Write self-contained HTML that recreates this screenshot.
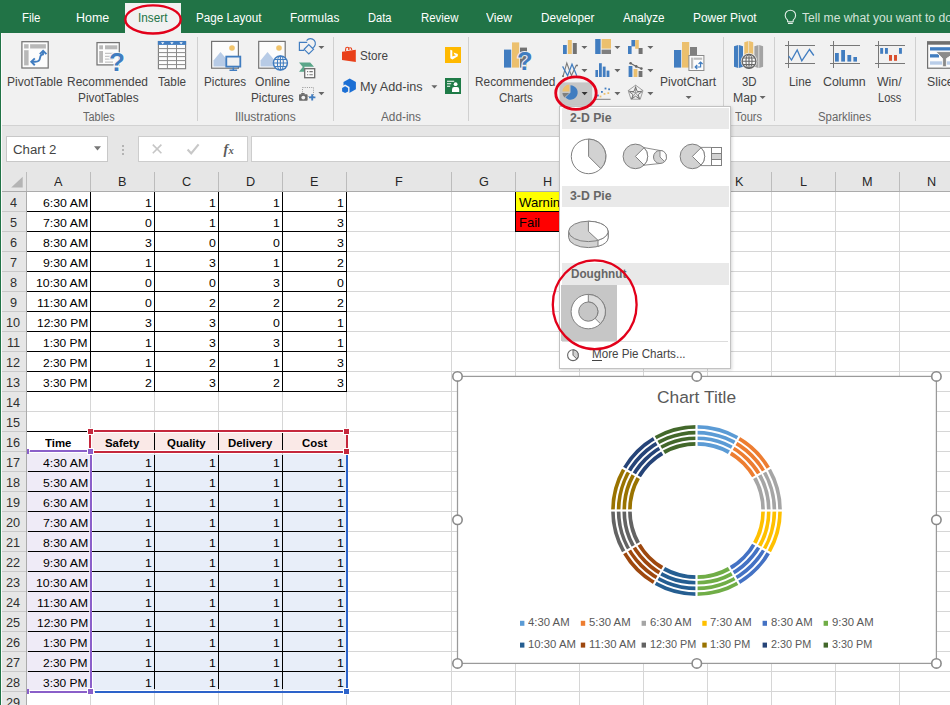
<!DOCTYPE html><html><head><meta charset="utf-8"><title>Excel</title><style>
html,body{margin:0;padding:0}
body{width:950px;height:705px;position:relative;overflow:hidden;background:#fff;font-family:'Liberation Sans', sans-serif;}
.t{position:absolute;white-space:nowrap;transform-origin:0 0;}
.a{position:absolute;}
svg{position:absolute;left:0;top:0;overflow:visible}

</style></head><body>
<div class="a" style="left:0;top:0;width:950px;height:33px;background:#217346"></div>
<div class="a" style="left:125px;top:3px;width:56px;height:30px;background:#f1f1f1"></div>
<div class="a" style="left:0;top:33px;width:950px;height:92px;background:#f1f1f1"></div>
<div class="a" style="left:0;top:125px;width:950px;height:1px;background:#d2d2d2"></div>
<div class="a" style="left:0;top:126px;width:950px;height:66px;background:#e6e6e6"></div>
<div class="a" style="left:6px;top:136px;width:100px;height:24px;background:#fff;border:1px solid #c8c8c8"></div>
<div class="a" style="left:138px;top:136px;width:108px;height:24px;background:#fff;border:1px solid #cdcdcd"></div>
<div class="a" style="left:251px;top:136px;width:710px;height:24px;background:#fff;border:1px solid #cdcdcd"></div>
<div class="a" style="left:0;top:192px;width:26px;height:513px;background:#e6e6e6"></div>
<svg width="950" height="705" viewBox="0 0 950 705" shape-rendering="crispEdges">
<rect x="27" y="453" width="63" height="237" fill="#efebf7"/>
<rect x="93" y="454" width="253" height="236" fill="#e8eef9"/>
<rect x="92" y="433" width="254" height="17" fill="#fae9e7"/>
<rect x="516" y="192" width="63" height="19" fill="#ffff00"/>
<rect x="516" y="212" width="63" height="19" fill="#ff0000"/>
<rect x="90" y="192" width="1" height="513" fill="#d6d6d6"/>
<rect x="154" y="192" width="1" height="513" fill="#d6d6d6"/>
<rect x="218" y="192" width="1" height="513" fill="#d6d6d6"/>
<rect x="282" y="192" width="1" height="513" fill="#d6d6d6"/>
<rect x="346" y="192" width="1" height="513" fill="#d6d6d6"/>
<rect x="451" y="192" width="1" height="513" fill="#d6d6d6"/>
<rect x="515" y="192" width="1" height="513" fill="#d6d6d6"/>
<rect x="579" y="192" width="1" height="513" fill="#d6d6d6"/>
<rect x="643" y="192" width="1" height="513" fill="#d6d6d6"/>
<rect x="707" y="192" width="1" height="513" fill="#d6d6d6"/>
<rect x="771" y="192" width="1" height="513" fill="#d6d6d6"/>
<rect x="835" y="192" width="1" height="513" fill="#d6d6d6"/>
<rect x="899" y="192" width="1" height="513" fill="#d6d6d6"/>
<rect x="27" y="211" width="923" height="1" fill="#d6d6d6"/>
<rect x="27" y="231" width="923" height="1" fill="#d6d6d6"/>
<rect x="27" y="251" width="923" height="1" fill="#d6d6d6"/>
<rect x="27" y="271" width="923" height="1" fill="#d6d6d6"/>
<rect x="27" y="291" width="923" height="1" fill="#d6d6d6"/>
<rect x="27" y="311" width="923" height="1" fill="#d6d6d6"/>
<rect x="27" y="331" width="923" height="1" fill="#d6d6d6"/>
<rect x="27" y="351" width="923" height="1" fill="#d6d6d6"/>
<rect x="27" y="371" width="923" height="1" fill="#d6d6d6"/>
<rect x="27" y="391" width="923" height="1" fill="#d6d6d6"/>
<rect x="27" y="411" width="923" height="1" fill="#d6d6d6"/>
<rect x="27" y="431" width="923" height="1" fill="#d6d6d6"/>
<rect x="27" y="451" width="923" height="1" fill="#d6d6d6"/>
<rect x="27" y="471" width="923" height="1" fill="#d6d6d6"/>
<rect x="27" y="491" width="923" height="1" fill="#d6d6d6"/>
<rect x="27" y="511" width="923" height="1" fill="#d6d6d6"/>
<rect x="27" y="531" width="923" height="1" fill="#d6d6d6"/>
<rect x="27" y="551" width="923" height="1" fill="#d6d6d6"/>
<rect x="27" y="571" width="923" height="1" fill="#d6d6d6"/>
<rect x="27" y="591" width="923" height="1" fill="#d6d6d6"/>
<rect x="27" y="611" width="923" height="1" fill="#d6d6d6"/>
<rect x="27" y="631" width="923" height="1" fill="#d6d6d6"/>
<rect x="27" y="651" width="923" height="1" fill="#d6d6d6"/>
<rect x="27" y="671" width="923" height="1" fill="#d6d6d6"/>
<rect x="27" y="691" width="923" height="1" fill="#d6d6d6"/>
<rect x="27" y="711" width="923" height="1" fill="#d6d6d6"/>
<rect x="26" y="172" width="1" height="19" fill="#bcbcbc"/>
<rect x="90" y="172" width="1" height="19" fill="#bcbcbc"/>
<rect x="154" y="172" width="1" height="19" fill="#bcbcbc"/>
<rect x="218" y="172" width="1" height="19" fill="#bcbcbc"/>
<rect x="282" y="172" width="1" height="19" fill="#bcbcbc"/>
<rect x="346" y="172" width="1" height="19" fill="#bcbcbc"/>
<rect x="451" y="172" width="1" height="19" fill="#bcbcbc"/>
<rect x="515" y="172" width="1" height="19" fill="#bcbcbc"/>
<rect x="579" y="172" width="1" height="19" fill="#bcbcbc"/>
<rect x="643" y="172" width="1" height="19" fill="#bcbcbc"/>
<rect x="707" y="172" width="1" height="19" fill="#bcbcbc"/>
<rect x="771" y="172" width="1" height="19" fill="#bcbcbc"/>
<rect x="835" y="172" width="1" height="19" fill="#bcbcbc"/>
<rect x="899" y="172" width="1" height="19" fill="#bcbcbc"/>
<rect x="0" y="191" width="950" height="1" fill="#ababab"/>
<rect x="26" y="192" width="1" height="513" fill="#ababab"/>
<rect x="2" y="211" width="24" height="1" fill="#c9c9c9"/>
<rect x="2" y="231" width="24" height="1" fill="#c9c9c9"/>
<rect x="2" y="251" width="24" height="1" fill="#c9c9c9"/>
<rect x="2" y="271" width="24" height="1" fill="#c9c9c9"/>
<rect x="2" y="291" width="24" height="1" fill="#c9c9c9"/>
<rect x="2" y="311" width="24" height="1" fill="#c9c9c9"/>
<rect x="2" y="331" width="24" height="1" fill="#c9c9c9"/>
<rect x="2" y="351" width="24" height="1" fill="#c9c9c9"/>
<rect x="2" y="371" width="24" height="1" fill="#c9c9c9"/>
<rect x="2" y="391" width="24" height="1" fill="#c9c9c9"/>
<rect x="2" y="411" width="24" height="1" fill="#c9c9c9"/>
<rect x="2" y="431" width="24" height="1" fill="#c9c9c9"/>
<rect x="2" y="451" width="24" height="1" fill="#c9c9c9"/>
<rect x="2" y="471" width="24" height="1" fill="#c9c9c9"/>
<rect x="2" y="491" width="24" height="1" fill="#c9c9c9"/>
<rect x="2" y="511" width="24" height="1" fill="#c9c9c9"/>
<rect x="2" y="531" width="24" height="1" fill="#c9c9c9"/>
<rect x="2" y="551" width="24" height="1" fill="#c9c9c9"/>
<rect x="2" y="571" width="24" height="1" fill="#c9c9c9"/>
<rect x="2" y="591" width="24" height="1" fill="#c9c9c9"/>
<rect x="2" y="611" width="24" height="1" fill="#c9c9c9"/>
<rect x="2" y="631" width="24" height="1" fill="#c9c9c9"/>
<rect x="2" y="651" width="24" height="1" fill="#c9c9c9"/>
<rect x="2" y="671" width="24" height="1" fill="#c9c9c9"/>
<rect x="2" y="691" width="24" height="1" fill="#c9c9c9"/>
<rect x="2" y="711" width="24" height="1" fill="#c9c9c9"/>
<rect x="27" y="211" width="320" height="1" fill="#000"/>
<rect x="27" y="231" width="320" height="1" fill="#000"/>
<rect x="27" y="251" width="320" height="1" fill="#000"/>
<rect x="27" y="271" width="320" height="1" fill="#000"/>
<rect x="27" y="291" width="320" height="1" fill="#000"/>
<rect x="27" y="311" width="320" height="1" fill="#000"/>
<rect x="27" y="331" width="320" height="1" fill="#000"/>
<rect x="27" y="351" width="320" height="1" fill="#000"/>
<rect x="27" y="371" width="320" height="1" fill="#000"/>
<rect x="27" y="391" width="320" height="1" fill="#000"/>
<rect x="90" y="192" width="1" height="200" fill="#000"/>
<rect x="154" y="192" width="1" height="200" fill="#000"/>
<rect x="218" y="192" width="1" height="200" fill="#000"/>
<rect x="282" y="192" width="1" height="200" fill="#000"/>
<rect x="346" y="192" width="1" height="200" fill="#000"/>
<path d="M515.5,192v39.5h64 M515.5,211.5h64" fill="none" stroke="#000" stroke-width="1"/>
<rect x="27" y="431" width="60" height="1" fill="#000"/>
<rect x="28" y="471" width="61" height="1" fill="#000"/>
<rect x="92" y="471" width="253" height="1" fill="#000"/>
<rect x="28" y="491" width="61" height="1" fill="#000"/>
<rect x="92" y="491" width="253" height="1" fill="#000"/>
<rect x="28" y="511" width="61" height="1" fill="#000"/>
<rect x="92" y="511" width="253" height="1" fill="#000"/>
<rect x="28" y="531" width="61" height="1" fill="#000"/>
<rect x="92" y="531" width="253" height="1" fill="#000"/>
<rect x="28" y="551" width="61" height="1" fill="#000"/>
<rect x="92" y="551" width="253" height="1" fill="#000"/>
<rect x="28" y="571" width="61" height="1" fill="#000"/>
<rect x="92" y="571" width="253" height="1" fill="#000"/>
<rect x="28" y="591" width="61" height="1" fill="#000"/>
<rect x="92" y="591" width="253" height="1" fill="#000"/>
<rect x="28" y="611" width="61" height="1" fill="#000"/>
<rect x="92" y="611" width="253" height="1" fill="#000"/>
<rect x="28" y="631" width="61" height="1" fill="#000"/>
<rect x="92" y="631" width="253" height="1" fill="#000"/>
<rect x="28" y="651" width="61" height="1" fill="#000"/>
<rect x="92" y="651" width="253" height="1" fill="#000"/>
<rect x="28" y="671" width="61" height="1" fill="#000"/>
<rect x="92" y="671" width="253" height="1" fill="#000"/>
<rect x="154" y="433" width="1" height="17" fill="#000"/>
<rect x="154" y="455" width="1" height="234" fill="#000"/>
<rect x="218" y="433" width="1" height="17" fill="#000"/>
<rect x="218" y="455" width="1" height="234" fill="#000"/>
<rect x="282" y="433" width="1" height="17" fill="#000"/>
<rect x="282" y="455" width="1" height="234" fill="#000"/>
<rect x="87" y="428" width="7" height="7" fill="#fff"/><rect x="87" y="448" width="7" height="7" fill="#fff"/>
<rect x="343" y="428" width="7" height="7" fill="#fff"/><rect x="343" y="448" width="7" height="7" fill="#fff"/>
<rect x="91" y="432" width="1" height="19" fill="#fff"/><rect x="92" y="432" width="252" height="1" fill="#fff"/><rect x="92" y="450" width="252" height="1" fill="#fff"/>
<rect x="87" y="688" width="7" height="7" fill="#fff"/><rect x="343" y="688" width="7" height="7" fill="#fff"/>
<rect x="346" y="192" width="1" height="200" fill="#000"/>
<rect x="30" y="450" width="57" height="2" fill="#8a5fc9"/>
<rect x="90" y="455" width="2" height="233" fill="#8a5fc9"/>
<rect x="30" y="691" width="57" height="2" fill="#8a5fc9"/>
<rect x="27" y="449" width="2" height="5" fill="#8a5fc9"/><rect x="27" y="689" width="2" height="5" fill="#8a5fc9"/>
<rect x="95" y="691" width="248" height="2" fill="#2d63ca"/>
<rect x="346" y="455" width="2" height="233" fill="#2d63ca"/>
<rect x="94" y="430" width="249" height="2" fill="#c5283d"/>
<rect x="94" y="451" width="249" height="2" fill="#c5283d"/>
<rect x="89" y="435" width="2" height="13" fill="#c5283d"/>
<rect x="346" y="435" width="2" height="13" fill="#c5283d"/>
<rect x="88" y="429" width="5" height="5" fill="#c5283d"/><rect x="344" y="429" width="5" height="5" fill="#c5283d"/><rect x="344" y="449" width="5" height="5" fill="#c5283d"/>
<rect x="88" y="449" width="5" height="5" fill="#8a5fc9"/><rect x="88" y="689" width="5" height="5" fill="#8a5fc9"/>
<rect x="344" y="689" width="5" height="5" fill="#2d63ca"/>
</svg>
<svg width="950" height="705" viewBox="0 0 950 705">
<path d="M197.5,37v84" stroke="#d0d0d0" stroke-width="1"/>
<path d="M333.5,37v84" stroke="#d0d0d0" stroke-width="1"/>
<path d="M468.5,37v84" stroke="#d0d0d0" stroke-width="1"/>
<path d="M723.5,37v84" stroke="#d0d0d0" stroke-width="1"/>
<path d="M774.5,37v84" stroke="#d0d0d0" stroke-width="1"/>
<path d="M915.5,37v84" stroke="#d0d0d0" stroke-width="1"/>
<rect x="21.9" y="41.7" width="26.3" height="26.3" fill="#fcfcfc" stroke="#747474" stroke-width="1.25"/>
<rect x="24.1" y="44.2" width="4.5" height="4.3" fill="#b8b8b8"/>
<rect x="30.1" y="44.2" width="15.8" height="4.3" fill="#b8b8b8"/>
<rect x="24.1" y="50.2" width="4.5" height="15.2" fill="#b8b8b8"/>
<path d="M32,61.8 h3.2 c3.4,0 4.6,-1.6 4.8,-3.8 c0.2,-2.2 1.2,-3.4 3,-3.6 v-3.2" fill="none" stroke="#417dc0" stroke-width="1.9"/>
<path d="M39.8,54.2 l3.3,-3.4 l3.3,3.4" fill="none" stroke="#417dc0" stroke-width="1.9"/>
<path d="M34.8,58.4 l-3.5,3.4 l3.5,3.4" fill="none" stroke="#417dc0" stroke-width="1.9"/>
<rect x="97" y="42.6" width="22.3" height="22.3" fill="#fcfcfc" stroke="#747474" stroke-width="1.25"/>
<rect x="99.2" y="45.3" width="3.8" height="4" fill="#b8b8b8"/>
<rect x="105" y="45.3" width="12.3" height="4" fill="#b8b8b8"/>
<rect x="99.2" y="51" width="3.8" height="11.8" fill="#b8b8b8"/>
<path d="M105,53.4h8 M105,56.3h8 M105,59.2h8 M105,62.1h8" stroke="#c4c4c4" stroke-width="1.3"/>
<text x="109" y="70.5" font-family="Liberation Sans,sans-serif" font-weight="bold" font-size="26" fill="#f1f1f1" stroke="#f6f6f6" stroke-width="2.2">?</text>
<text x="109" y="70.5" font-family="Liberation Sans,sans-serif" font-weight="bold" font-size="26" fill="#417dc0">?</text>
<rect x="158.4" y="41.5" width="27.2" height="27.2" fill="#fdfdfd" stroke="#7c7c7c" stroke-width="1.1"/>
<rect x="157.9" y="41" width="28.2" height="3.9" fill="#417dc0"/>
<path d="M167.4,44.9v23.8 M176.5,44.9v23.8 M158,48.6h28 M158,52.6h28 M158,56.6h28 M158,60.6h28 M158,64.6h28" stroke="#8a8a8a" stroke-width="1"/>
<path d="M161,42.3h3.4l-1.7,1.9z M170.2,42.3h3.4l-1.7,1.9z M179.4,42.3h3.4l-1.7,1.9z" fill="#fff"/>
<rect x="211.6" y="41.4" width="26.8" height="26.8" fill="#fcfcfc" stroke="#747474" stroke-width="1.2"/>
<circle cx="232" cy="48" r="2.8" fill="#f0c36a"/>
<path d="M213.5,66.5 v-6 l7,-8.5 l5.5,6.5 v8z" fill="#b7cbe6"/>
<rect x="226.3" y="56.6" width="14" height="10" fill="#f1f1f1" stroke="#417dc0" stroke-width="1.8"/>
<path d="M233.3,67.5v2.5 M229.5,70.3h7.6" stroke="#417dc0" stroke-width="1.5"/>
<rect x="258.7" y="41.4" width="26.5" height="26.8" fill="#fcfcfc" stroke="#747474" stroke-width="1.2"/>
<circle cx="279" cy="48" r="2.8" fill="#f0c36a"/>
<path d="M260.5,66.5 v-6 l7,-8.5 l6,7 v7.5z" fill="#b7cbe6"/>
<circle cx="280.4" cy="63" r="7" fill="#f4f4f4" stroke="#417dc0" stroke-width="1.5"/>
<ellipse cx="280.4" cy="63" rx="3" ry="7" fill="none" stroke="#417dc0" stroke-width="1.1"/>
<path d="M273.4,63h14 M274.6,59.5h11.6 M274.6,66.5h11.6 M280.4,56v14" stroke="#417dc0" stroke-width="1.1"/>
<path d="M307.2,42.4 H299.4 V50.3 H304.2" fill="none" stroke="#417dc0" stroke-width="1.2"/>
<path d="M306.6,40.6 A4.9,4.9 0 1 1 312.6,48" fill="none" stroke="#417dc0" stroke-width="1.2"/>
<path d="M308.8,44.6 l4.7,4.7 l-4.7,4.7 l-4.7,-4.7z" fill="#f1f1f1" stroke="#417dc0" stroke-width="1.2"/>
<path d="M318.4,45.9 h6 l-3,3.2z" fill="#666"/>
<path d="M299,62.4 H310.2 L314,66.8 H304.4 V71.8 H299 L302.8,67.1z" fill="#5aa689"/>
<rect x="304.7" y="68.7" width="10" height="9" fill="#fafafa" stroke="#6b6b6b" stroke-width="1.3"/>
<path d="M307,71.6h1.2 M309.4,71.6h3.4 M307,74.8h1.2 M309.4,74.8h3.4" stroke="#777" stroke-width="1.1"/>
<rect x="302.5" y="87.5" width="11" height="9" fill="none" stroke="#999" stroke-width="1" stroke-dasharray="1,1.2"/>
<rect x="299" y="94.2" width="8.6" height="6.6" rx="0.8" fill="#6b6b6b"/>
<rect x="301.2" y="93" width="3.4" height="1.6" fill="#6b6b6b"/>
<circle cx="303.3" cy="97.6" r="1.9" fill="#f1f1f1"/>
<path d="M309,97.4h6.4 M312.2,94.2v6.4" stroke="#417dc0" stroke-width="1.9"/>
<path d="M318.4,92.1 h6 l-3,3.2z" fill="#666"/>
<path d="M342,51.8 L355.8,49.8 V61.9 L342,60.1z" fill="#e9401a"/>
<path d="M345.6,51 v-1.8 q0,-1.9 1.7,-1.9 q1.6,0 1.6,1.9 v0.8 M348.4,49.6 q0,-1.9 1.7,-1.9 q1.6,0 1.6,1.7 v0.6" fill="none" stroke="#e9401a" stroke-width="1.1"/>
<path d="M349.7,78.6 L355.9,82 V89.2 L349.7,92.7 L343.5,89.2 V82z" fill="#1c6fd4"/>
<path d="M345.1,84.6 L349.5,87.1 V92.2 L345.1,94.7 L340.7,92.2 V87.1z" fill="#f1f1f1"/>
<path d="M345.1,86.2 L348.1,87.9 V91.4 L345.1,93.1 L342.1,91.4 V87.9z" fill="#1c6fd4"/>
<path d="M431.4,85.3 h6 l-3,3.2z" fill="#666"/>
<rect x="445" y="47" width="16" height="16" fill="#ffb900"/>
<path d="M450.3,49.7 l2,0.7 v6.2 l3.6,-1.4 l-1.5,-0.7 l-0.9,-2.1 l4.3,1.5 v2.3 l-5.4,3.2 l-2.1,-1.2z" fill="#fff"/>
<rect x="445" y="78" width="16" height="16" fill="#1e7b47"/>
<path d="M447,81.3h7.2 M447,83.8h4.2 M447,86.3h3.2" stroke="#fff" stroke-width="1.1"/>
<circle cx="455.6" cy="84.2" r="1.9" fill="#fff"/>
<path d="M452,92 v-2.6 q0,-2.4 2.2,-2.4 h2.8 q2.2,0 2.2,2.4 v2.6z" fill="#fff"/>
<rect x="504" y="49.6" width="7.2" height="18" fill="#417dc0"/>
<rect x="512" y="42.4" width="7.2" height="25.2" fill="#ecc06e"/>
<rect x="520" y="47.6" width="7" height="20" fill="#727272"/>
<text x="517" y="70.3" font-family="Liberation Sans,sans-serif" font-weight="bold" font-size="25" fill="#f1f1f1" stroke="#f1f1f1" stroke-width="2">?</text>
<text x="517" y="70.3" font-family="Liberation Sans,sans-serif" font-weight="bold" font-size="25.5" fill="#417dc0">?</text>
<rect x="559.4" y="82.4" width="32.8" height="23.4" fill="#c6c6c6"/>
<rect x="563" y="45" width="3.8" height="9" fill="#417dc0"/><rect x="567.8" y="40" width="4" height="14" fill="#ecc06e"/><rect x="572.8" y="43" width="4" height="11" fill="#727272"/>
<path d="M581.4,45.9 h6 l-3,3.2z" fill="#666"/>
<path d="M563,76.4 l3.8,-13.4 l4.6,12.6 l5,-10.6" fill="none" stroke="#7a7a7a" stroke-width="1.1"/>
<path d="M562.6,66.4 l5,9.4 l4.4,-11.6 l4.8,11.6" fill="none" stroke="#417dc0" stroke-width="1.2"/>
<circle cx="563" cy="76.2" r="0.9" fill="#666"/><circle cx="577" cy="65.4" r="0.9" fill="#666"/>
<path d="M581.4,69.1 h6 l-3,3.2z" fill="#666"/>
<path d="M570.5,92.5 v-7.2 a7.2,7.2 0 1 1 -5.1,12.3z" fill="#417dc0"/>
<path d="M569.4,91.6 v-7 a7,7 0 0 0 -7,7z" fill="#ecc06e"/>
<path d="M569.2,93 h-6.8 a7,7 0 0 0 2,4.6z" fill="#7f7f7f"/>
<path d="M581.6,92.1 h6 l-3,3.2z" fill="#333"/>
<rect x="595.2" y="39" width="5.4" height="15" fill="#417dc0"/><rect x="601.6" y="39" width="9.4" height="9.6" fill="#ecc06e"/><rect x="601.6" y="49.6" width="9.4" height="4.4" fill="#7f7f7f"/>
<path d="M614.4,45.9 h6 l-3,3.2z" fill="#666"/>
<rect x="595.4" y="70" width="2.6" height="7" fill="#417dc0"/><rect x="599" y="63.2" width="2.8" height="13.8" fill="#417dc0"/><rect x="602.8" y="66.6" width="2.8" height="10.4" fill="#417dc0"/><rect x="606.6" y="70.6" width="2.8" height="6.4" fill="#417dc0"/>
<path d="M614.4,69.1 h6 l-3,3.2z" fill="#666"/>
<path d="M595,99.3h15.6" stroke="#7f7f7f" stroke-width="1"/>
<g fill="#417dc0"><rect x="597" y="94.6" width="1.8" height="1.8"/><rect x="601" y="91" width="1.8" height="1.8"/><rect x="604.6" y="87.6" width="1.8" height="1.8"/><rect x="608.2" y="88.4" width="1.8" height="1.8"/></g>
<g fill="#ecc06e"><rect x="599.6" y="95.6" width="1.8" height="1.8"/><rect x="603.6" y="93" width="1.8" height="1.8"/><rect x="607.4" y="92.2" width="1.8" height="1.8"/></g>
<path d="M614.4,92.1 h6 l-3,3.2z" fill="#666"/>
<rect x="628" y="46" width="3.6" height="8" fill="#417dc0"/><rect x="631.4" y="40" width="3.8" height="6.4" fill="#417dc0"/><rect x="635.2" y="40" width="3.6" height="8.8" fill="#ecc06e"/><rect x="638.6" y="48" width="4" height="6" fill="#727272"/>
<path d="M647.4,45.9 h6 l-3,3.2z" fill="#666"/>
<rect x="628.6" y="66" width="3.8" height="11" fill="#417dc0"/><rect x="633.6" y="69" width="3.8" height="8" fill="#ecc06e"/><rect x="638.6" y="71" width="3.8" height="6" fill="#727272"/>
<path d="M630.6,63.2 l5.6,3.2 l5,2.2" fill="none" stroke="#666" stroke-width="1.1"/><circle cx="630.6" cy="63.2" r="1.3" fill="#666"/><circle cx="636.2" cy="66.4" r="1.3" fill="#666"/><circle cx="641.4" cy="68.6" r="1.3" fill="#666"/>
<path d="M647.4,69.1 h6 l-3,3.2z" fill="#666"/>
<path d="M635.6,85.2 l7.4,5.4 l-2.8,8.6 h-9.2 l-2.8,-8.6z M635.6,85.2v7.8 M643,90.6 l-7.4,2.4 M640.2,99.2 l-4.6,-6.2 M631,99.2 l4.6,-6.2 M628.2,90.6 l7.4,2.4" fill="none" stroke="#8a8a8a" stroke-width="0.8"/>
<path d="M635.6,87 l1.6,4.4 l4.6,0.4 l-3.6,2.8 l1.2,4.2 l-3.8,-2.6 l-3.8,2.6 l1.2,-4.2 l-3.6,-2.8 l4.6,-0.4z" fill="none" stroke="#6a6a6a" stroke-width="0.9"/>
<path d="M647.4,92.1 h6 l-3,3.2z" fill="#666"/>
<rect x="674" y="50" width="7.2" height="17.6" fill="#417dc0"/>
<rect x="682" y="42" width="7.2" height="25.6" fill="#ecc06e"/>
<rect x="690" y="47" width="7" height="9" fill="#7f7f7f"/>
<rect x="688.9" y="55.5" width="15" height="15" fill="#fcfcfc" stroke="#8c8c8c"/>
<rect x="693.6" y="57.6" width="8.6" height="2.2" fill="#bdbdbd"/><rect x="691" y="57.6" width="2.2" height="11" fill="#bdbdbd"/>
<path d="M695.4,67 h5.2 v-4.8 M698.6,64 l2,-2 l2,2 M697.2,65 l-2,2 l2,2" fill="none" stroke="#417dc0" stroke-width="1.2"/>
<path d="M685.6,95.9 h6 l-3,3.2z" fill="#666"/>
<path d="M734,46.2 l4.2,-1.2 v23 l-4.2,-1.2z M738.9,45 l4.1,1.2 v20.6 l-4.1,1.2z" fill="#417dc0"/>
<path d="M744.3,42.2 l4.1,-1.2 v19 h-4.1z M749.1,41 l4.1,1.2 v17.8 h-4.1z" fill="#ecc06e"/>
<path d="M754.4,46.2 l4.1,-1.2 v23 l-4.1,-1.2z M759.2,45 l3.9,1.2 v20.6 l-3.9,1.2z" fill="#a3a3a3"/>
<circle cx="749" cy="61.3" r="8.2" fill="#f1f1f1"/>
<circle cx="749" cy="61.3" r="6.9" fill="#fafafa" stroke="#676767" stroke-width="1.4"/>
<ellipse cx="749" cy="61.3" rx="3" ry="6.9" fill="none" stroke="#676767" stroke-width="1.1"/>
<path d="M742.2,61.3h13.6 M743.2,58h11.6 M743.2,64.6h11.6 M749,54.4v13.8" stroke="#676767" stroke-width="1.1"/>
<path d="M759.6,95.9 h6 l-3,3.2z" fill="#666"/>
<path d="M788.5,41v27 M785,45.5h30 M785,63.5h30" stroke="#777" stroke-width="1" fill="none"/>
<path d="M788.7,56 L791.5,60 L797.2,50 L801.8,60.8 L809.5,49.5 L813.8,55.5" fill="none" stroke="#417dc0" stroke-width="1.3"/>
<path d="M833.5,41v27 M830,45.5h30 M830,63.5h30" stroke="#777" stroke-width="1" fill="none"/>
<rect x="835" y="53" width="3.8" height="8.6" fill="#417dc0"/><rect x="841.2" y="50" width="3.8" height="11.6" fill="#417dc0"/><rect x="847.4" y="55" width="3.8" height="6.6" fill="#417dc0"/><rect x="853.4" y="57" width="3.6" height="4.6" fill="#417dc0"/>
<path d="M878.5,41v27 M875,45.5h30 M875,63.5h30" stroke="#777" stroke-width="1" fill="none"/>
<rect x="880.2" y="48" width="2.9" height="5.8" fill="#417dc0"/><rect x="885" y="48" width="2.9" height="5.8" fill="#417dc0"/><rect x="899" y="48" width="2.9" height="5.8" fill="#417dc0"/>
<rect x="889" y="55" width="3" height="5.8" fill="#d9502f"/><rect x="894" y="55" width="3" height="5.8" fill="#d9502f"/>
<rect x="927.6" y="42" width="30" height="26.2" fill="#fcfcfc" stroke="#707070" stroke-width="1.2"/>
<rect x="927" y="41.3" width="30" height="3.4" fill="#707070"/>
<rect x="930" y="47.2" width="22" height="3.3" fill="#417dc0"/><rect x="930" y="54.2" width="9" height="3.3" fill="#417dc0"/><rect x="930" y="61.3" width="22" height="3.4" fill="#b9cde8"/>
<path d="M935.8,51.6 h20 v1 l-9.4,6 v8.2 h-3.8 v-8.2z" fill="#8a8a8a" stroke="#fafafa" stroke-width="0.9"/>
<path d="M787.6,20.2 q-2.4,-2.2 -2.4,-4.8 a5.2,5.2 0 0 1 10.4,0 q0,2.6 -2.4,4.8 v1.6 h-5.6z M788,23.4h4.8" fill="none" stroke="#e3eee7" stroke-width="1.1"/>
<path d="M22.7,176.7 v10.7 h-11.5z" fill="#b4b4b4"/>
<path d="M94,146.2 h7 l-3.5,4.2z" fill="#777"/>
<g fill="#b4b4b4"><rect x="122" y="145" width="2" height="2"/><rect x="122" y="149" width="2" height="2"/><rect x="122" y="153" width="2" height="2"/></g>
<path d="M152.8,144.6 l8.6,8.6 M161.4,144.6 l-8.6,8.6" stroke="#c6c6c6" stroke-width="1.6" fill="none"/>
<path d="M187.6,149.6 l3.6,3.8 l7.4,-9" stroke="#c8c8c8" stroke-width="2.2" fill="none"/>
<text x="223.6" y="153.6" font-family="Liberation Serif,serif" font-style="italic" font-weight="bold" font-size="14" fill="#5a5a5a">f</text><text x="228.4" y="154" font-family="Liberation Serif,serif" font-style="italic" font-weight="bold" font-size="10.5" fill="#5a5a5a">x</text>
<rect x="1" y="33" width="1" height="672" fill="#fbfbfb" shape-rendering="crispEdges"/>
<rect x="0" y="0" width="1" height="705" fill="#217346" shape-rendering="crispEdges"/>
</svg>
<span class="t" style="top:11px;font-size:12px;line-height:14px;color:#fff;left:22.00px;transform:scaleX(0.9564);">File</span>
<span class="t" style="top:11px;font-size:12px;line-height:14px;color:#fff;left:76.30px;transform:scaleX(1.0370);">Home</span>
<span class="t" style="top:11px;font-size:12px;line-height:14px;color:#217346;left:137.80px;transform:scaleX(0.9795);">Insert</span>
<span class="t" style="top:11px;font-size:12px;line-height:14px;color:#fff;left:195.90px;transform:scaleX(0.9705);">Page Layout</span>
<span class="t" style="top:11px;font-size:12px;line-height:14px;color:#fff;left:290.00px;transform:scaleX(0.9857);">Formulas</span>
<span class="t" style="top:11px;font-size:12px;line-height:14px;color:#fff;left:368.00px;transform:scaleX(0.9267);">Data</span>
<span class="t" style="top:11px;font-size:12px;line-height:14px;color:#fff;left:421.00px;transform:scaleX(0.9502);">Review</span>
<span class="t" style="top:11px;font-size:12px;line-height:14px;color:#fff;left:486.20px;transform:scaleX(1.0079);">View</span>
<span class="t" style="top:11px;font-size:12px;line-height:14px;color:#fff;left:540.90px;transform:scaleX(0.9762);">Developer</span>
<span class="t" style="top:11px;font-size:12px;line-height:14px;color:#fff;left:622.60px;transform:scaleX(0.9718);">Analyze</span>
<span class="t" style="top:11px;font-size:12px;line-height:14px;color:#fff;left:692.70px;transform:scaleX(0.9933);">Power Pivot</span>
<span class="t" style="top:11px;font-size:12px;line-height:14px;color:#d3e3d9;left:802.10px;transform:scaleX(1.0123);">Tell me what you want to do</span>
<span class="t" style="top:75px;font-size:12px;line-height:14px;color:#444;left:6.90px;transform:scaleX(1.0041);">PivotTable</span>
<span class="t" style="top:75px;font-size:12px;line-height:14px;color:#444;left:67.10px;transform:scaleX(0.9954);">Recommended</span>
<span class="t" style="top:91px;font-size:12px;line-height:14px;color:#444;left:77.90px;transform:scaleX(0.9874);">PivotTables</span>
<span class="t" style="top:75px;font-size:12px;line-height:14px;color:#444;left:158.10px;transform:scaleX(0.9760);">Table</span>
<span class="t" style="top:75px;font-size:12px;line-height:14px;color:#444;left:203.90px;transform:scaleX(0.9733);">Pictures</span>
<span class="t" style="top:75px;font-size:12px;line-height:14px;color:#444;left:255.10px;transform:scaleX(1.0090);">Online</span>
<span class="t" style="top:91px;font-size:12px;line-height:14px;color:#444;left:250.50px;transform:scaleX(0.9825);">Pictures</span>
<span class="t" style="top:49px;font-size:12px;line-height:14px;color:#444;left:359.50px;transform:scaleX(0.9760);">Store</span>
<span class="t" style="top:80px;font-size:12px;line-height:14px;color:#444;left:359.90px;transform:scaleX(1.0546);">My Add-ins</span>
<span class="t" style="top:75px;font-size:12px;line-height:14px;color:#444;left:475.10px;transform:scaleX(0.9880);">Recommended</span>
<span class="t" style="top:91px;font-size:12px;line-height:14px;color:#444;left:499.10px;transform:scaleX(0.9563);">Charts</span>
<span class="t" style="top:75px;font-size:12px;line-height:14px;color:#444;left:660.10px;transform:scaleX(0.9994);">PivotChart</span>
<span class="t" style="top:75px;font-size:12px;line-height:14px;color:#444;left:741.50px;transform:scaleX(0.9515);">3D</span>
<span class="t" style="top:91px;font-size:12px;line-height:14px;color:#444;left:733.10px;transform:scaleX(1.0195);">Map</span>
<span class="t" style="top:75px;font-size:12px;line-height:14px;color:#444;left:789.00px;transform:scaleX(0.9785);">Line</span>
<span class="t" style="top:75px;font-size:12px;line-height:14px;color:#444;left:823.10px;transform:scaleX(1.0324);">Column</span>
<span class="t" style="top:75px;font-size:12px;line-height:14px;color:#444;left:876.90px;transform:scaleX(1.0250);">Win/</span>
<span class="t" style="top:91px;font-size:12px;line-height:14px;color:#444;left:877.90px;transform:scaleX(0.9188);">Loss</span>
<span class="t" style="top:75px;font-size:12px;line-height:14px;color:#444;left:926.80px;transform:scaleX(1.0228);">Slicer</span>
<span class="t" style="top:110px;font-size:12px;line-height:14px;color:#666;left:82.50px;transform:scaleX(0.9110);">Tables</span>
<span class="t" style="top:110px;font-size:12px;line-height:14px;color:#666;left:235.10px;transform:scaleX(1.0016);">Illustrations</span>
<span class="t" style="top:110px;font-size:12px;line-height:14px;color:#666;left:380.90px;transform:scaleX(0.9831);">Add-ins</span>
<span class="t" style="top:110px;font-size:12px;line-height:14px;color:#666;left:734.90px;transform:scaleX(0.9201);">Tours</span>
<span class="t" style="top:110px;font-size:12px;line-height:14px;color:#666;left:817.80px;transform:scaleX(0.9477);">Sparklines</span>
<span class="t" style="top:143px;font-size:12px;line-height:14px;color:#444;left:12.70px;transform:scaleX(1.1027);">Chart 2</span>
<span class="t" style="top:175px;font-size:12.2px;line-height:14px;color:#262626;left:54.27px;transform:scaleX(1.0400);">A</span>
<span class="t" style="top:175px;font-size:12.2px;line-height:14px;color:#262626;left:118.27px;transform:scaleX(1.0400);">B</span>
<span class="t" style="top:175px;font-size:12.2px;line-height:14px;color:#262626;left:181.92px;transform:scaleX(1.0400);">C</span>
<span class="t" style="top:175px;font-size:12.2px;line-height:14px;color:#262626;left:245.92px;transform:scaleX(1.0400);">D</span>
<span class="t" style="top:175px;font-size:12.2px;line-height:14px;color:#262626;left:310.27px;transform:scaleX(1.0400);">E</span>
<span class="t" style="top:175px;font-size:12.2px;line-height:14px;color:#262626;left:395.12px;transform:scaleX(1.0400);">F</span>
<span class="t" style="top:175px;font-size:12.2px;line-height:14px;color:#262626;left:478.57px;transform:scaleX(1.0400);">G</span>
<span class="t" style="top:175px;font-size:12.2px;line-height:14px;color:#262626;left:542.92px;transform:scaleX(1.0400);">H</span>
<span class="t" style="top:175px;font-size:12.2px;line-height:14px;color:#262626;left:735.27px;transform:scaleX(1.0400);">K</span>
<span class="t" style="top:175px;font-size:12.2px;line-height:14px;color:#262626;left:799.97px;transform:scaleX(1.0400);">L</span>
<span class="t" style="top:175px;font-size:12.2px;line-height:14px;color:#262626;left:862.22px;transform:scaleX(1.0400);">M</span>
<span class="t" style="top:175px;font-size:12.2px;line-height:14px;color:#262626;left:926.92px;transform:scaleX(1.0400);">N</span>
<span class="t" style="top:196px;font-size:12.2px;line-height:14px;color:#303030;left:9.87px;transform:scaleX(1.0400);">4</span>
<span class="t" style="top:216px;font-size:12.2px;line-height:14px;color:#303030;left:9.87px;transform:scaleX(1.0400);">5</span>
<span class="t" style="top:236px;font-size:12.2px;line-height:14px;color:#303030;left:9.87px;transform:scaleX(1.0400);">6</span>
<span class="t" style="top:256px;font-size:12.2px;line-height:14px;color:#303030;left:9.87px;transform:scaleX(1.0400);">7</span>
<span class="t" style="top:276px;font-size:12.2px;line-height:14px;color:#303030;left:9.87px;transform:scaleX(1.0400);">8</span>
<span class="t" style="top:296px;font-size:12.2px;line-height:14px;color:#303030;left:9.87px;transform:scaleX(1.0400);">9</span>
<span class="t" style="top:316px;font-size:12.2px;line-height:14px;color:#303030;left:6.35px;transform:scaleX(1.0400);">10</span>
<span class="t" style="top:336px;font-size:12.2px;line-height:14px;color:#303030;left:6.82px;transform:scaleX(1.0400);">11</span>
<span class="t" style="top:356px;font-size:12.2px;line-height:14px;color:#303030;left:6.35px;transform:scaleX(1.0400);">12</span>
<span class="t" style="top:376px;font-size:12.2px;line-height:14px;color:#303030;left:6.35px;transform:scaleX(1.0400);">13</span>
<span class="t" style="top:396px;font-size:12.2px;line-height:14px;color:#303030;left:6.35px;transform:scaleX(1.0400);">14</span>
<span class="t" style="top:416px;font-size:12.2px;line-height:14px;color:#303030;left:6.35px;transform:scaleX(1.0400);">15</span>
<span class="t" style="top:436px;font-size:12.2px;line-height:14px;color:#303030;left:6.35px;transform:scaleX(1.0400);">16</span>
<span class="t" style="top:456px;font-size:12.2px;line-height:14px;color:#303030;left:6.35px;transform:scaleX(1.0400);">17</span>
<span class="t" style="top:476px;font-size:12.2px;line-height:14px;color:#303030;left:6.35px;transform:scaleX(1.0400);">18</span>
<span class="t" style="top:496px;font-size:12.2px;line-height:14px;color:#303030;left:6.35px;transform:scaleX(1.0400);">19</span>
<span class="t" style="top:516px;font-size:12.2px;line-height:14px;color:#303030;left:6.35px;transform:scaleX(1.0400);">20</span>
<span class="t" style="top:536px;font-size:12.2px;line-height:14px;color:#303030;left:6.35px;transform:scaleX(1.0400);">21</span>
<span class="t" style="top:556px;font-size:12.2px;line-height:14px;color:#303030;left:6.35px;transform:scaleX(1.0400);">22</span>
<span class="t" style="top:576px;font-size:12.2px;line-height:14px;color:#303030;left:6.35px;transform:scaleX(1.0400);">23</span>
<span class="t" style="top:596px;font-size:12.2px;line-height:14px;color:#303030;left:6.35px;transform:scaleX(1.0400);">24</span>
<span class="t" style="top:616px;font-size:12.2px;line-height:14px;color:#303030;left:6.35px;transform:scaleX(1.0400);">25</span>
<span class="t" style="top:636px;font-size:12.2px;line-height:14px;color:#303030;left:6.35px;transform:scaleX(1.0400);">26</span>
<span class="t" style="top:656px;font-size:12.2px;line-height:14px;color:#303030;left:6.35px;transform:scaleX(1.0400);">27</span>
<span class="t" style="top:676px;font-size:12.2px;line-height:14px;color:#303030;left:6.35px;transform:scaleX(1.0400);">28</span>
<span class="t" style="top:696px;font-size:12.2px;line-height:14px;color:#303030;left:6.35px;transform:scaleX(1.0400);">29</span>
<span class="t" style="top:197px;font-size:11.2px;line-height:12px;color:#000;left:42.75px;transform:scaleX(1.1000);">6:30 AM</span>
<span class="t" style="top:197px;font-size:11.2px;line-height:12px;color:#000;left:145.04px;transform:scaleX(1.1000);">1</span>
<span class="t" style="top:197px;font-size:11.2px;line-height:12px;color:#000;left:209.04px;transform:scaleX(1.1000);">1</span>
<span class="t" style="top:197px;font-size:11.2px;line-height:12px;color:#000;left:273.04px;transform:scaleX(1.1000);">1</span>
<span class="t" style="top:197px;font-size:11.2px;line-height:12px;color:#000;left:337.04px;transform:scaleX(1.1000);">1</span>
<span class="t" style="top:217px;font-size:11.2px;line-height:12px;color:#000;left:42.75px;transform:scaleX(1.1000);">7:30 AM</span>
<span class="t" style="top:217px;font-size:11.2px;line-height:12px;color:#000;left:145.04px;transform:scaleX(1.1000);">0</span>
<span class="t" style="top:217px;font-size:11.2px;line-height:12px;color:#000;left:209.04px;transform:scaleX(1.1000);">1</span>
<span class="t" style="top:217px;font-size:11.2px;line-height:12px;color:#000;left:273.04px;transform:scaleX(1.1000);">1</span>
<span class="t" style="top:217px;font-size:11.2px;line-height:12px;color:#000;left:337.04px;transform:scaleX(1.1000);">3</span>
<span class="t" style="top:237px;font-size:11.2px;line-height:12px;color:#000;left:42.75px;transform:scaleX(1.1000);">8:30 AM</span>
<span class="t" style="top:237px;font-size:11.2px;line-height:12px;color:#000;left:145.04px;transform:scaleX(1.1000);">3</span>
<span class="t" style="top:237px;font-size:11.2px;line-height:12px;color:#000;left:209.04px;transform:scaleX(1.1000);">0</span>
<span class="t" style="top:237px;font-size:11.2px;line-height:12px;color:#000;left:273.04px;transform:scaleX(1.1000);">0</span>
<span class="t" style="top:237px;font-size:11.2px;line-height:12px;color:#000;left:337.04px;transform:scaleX(1.1000);">3</span>
<span class="t" style="top:257px;font-size:11.2px;line-height:12px;color:#000;left:42.75px;transform:scaleX(1.1000);">9:30 AM</span>
<span class="t" style="top:257px;font-size:11.2px;line-height:12px;color:#000;left:145.04px;transform:scaleX(1.1000);">1</span>
<span class="t" style="top:257px;font-size:11.2px;line-height:12px;color:#000;left:209.04px;transform:scaleX(1.1000);">3</span>
<span class="t" style="top:257px;font-size:11.2px;line-height:12px;color:#000;left:273.04px;transform:scaleX(1.1000);">1</span>
<span class="t" style="top:257px;font-size:11.2px;line-height:12px;color:#000;left:337.04px;transform:scaleX(1.1000);">2</span>
<span class="t" style="top:277px;font-size:11.2px;line-height:12px;color:#000;left:35.89px;transform:scaleX(1.1000);">10:30 AM</span>
<span class="t" style="top:277px;font-size:11.2px;line-height:12px;color:#000;left:145.04px;transform:scaleX(1.1000);">0</span>
<span class="t" style="top:277px;font-size:11.2px;line-height:12px;color:#000;left:209.04px;transform:scaleX(1.1000);">0</span>
<span class="t" style="top:277px;font-size:11.2px;line-height:12px;color:#000;left:273.04px;transform:scaleX(1.1000);">3</span>
<span class="t" style="top:277px;font-size:11.2px;line-height:12px;color:#000;left:337.04px;transform:scaleX(1.1000);">0</span>
<span class="t" style="top:297px;font-size:11.2px;line-height:12px;color:#000;left:36.82px;transform:scaleX(1.1000);">11:30 AM</span>
<span class="t" style="top:297px;font-size:11.2px;line-height:12px;color:#000;left:145.04px;transform:scaleX(1.1000);">0</span>
<span class="t" style="top:297px;font-size:11.2px;line-height:12px;color:#000;left:209.04px;transform:scaleX(1.1000);">2</span>
<span class="t" style="top:297px;font-size:11.2px;line-height:12px;color:#000;left:273.04px;transform:scaleX(1.1000);">2</span>
<span class="t" style="top:297px;font-size:11.2px;line-height:12px;color:#000;left:337.04px;transform:scaleX(1.1000);">2</span>
<span class="t" style="top:317px;font-size:11.2px;line-height:12px;color:#000;left:36.80px;transform:scaleX(1.0670);">12:30 PM</span>
<span class="t" style="top:317px;font-size:11.2px;line-height:12px;color:#000;left:145.04px;transform:scaleX(1.1000);">3</span>
<span class="t" style="top:317px;font-size:11.2px;line-height:12px;color:#000;left:209.04px;transform:scaleX(1.1000);">3</span>
<span class="t" style="top:317px;font-size:11.2px;line-height:12px;color:#000;left:273.04px;transform:scaleX(1.1000);">0</span>
<span class="t" style="top:317px;font-size:11.2px;line-height:12px;color:#000;left:337.04px;transform:scaleX(1.1000);">1</span>
<span class="t" style="top:337px;font-size:11.2px;line-height:12px;color:#000;left:43.44px;transform:scaleX(1.0670);">1:30 PM</span>
<span class="t" style="top:337px;font-size:11.2px;line-height:12px;color:#000;left:145.04px;transform:scaleX(1.1000);">1</span>
<span class="t" style="top:337px;font-size:11.2px;line-height:12px;color:#000;left:209.04px;transform:scaleX(1.1000);">3</span>
<span class="t" style="top:337px;font-size:11.2px;line-height:12px;color:#000;left:273.04px;transform:scaleX(1.1000);">3</span>
<span class="t" style="top:337px;font-size:11.2px;line-height:12px;color:#000;left:337.04px;transform:scaleX(1.1000);">1</span>
<span class="t" style="top:357px;font-size:11.2px;line-height:12px;color:#000;left:43.44px;transform:scaleX(1.0670);">2:30 PM</span>
<span class="t" style="top:357px;font-size:11.2px;line-height:12px;color:#000;left:145.04px;transform:scaleX(1.1000);">1</span>
<span class="t" style="top:357px;font-size:11.2px;line-height:12px;color:#000;left:209.04px;transform:scaleX(1.1000);">2</span>
<span class="t" style="top:357px;font-size:11.2px;line-height:12px;color:#000;left:273.04px;transform:scaleX(1.1000);">1</span>
<span class="t" style="top:357px;font-size:11.2px;line-height:12px;color:#000;left:337.04px;transform:scaleX(1.1000);">3</span>
<span class="t" style="top:377px;font-size:11.2px;line-height:12px;color:#000;left:43.44px;transform:scaleX(1.0670);">3:30 PM</span>
<span class="t" style="top:377px;font-size:11.2px;line-height:12px;color:#000;left:145.04px;transform:scaleX(1.1000);">2</span>
<span class="t" style="top:377px;font-size:11.2px;line-height:12px;color:#000;left:209.04px;transform:scaleX(1.1000);">3</span>
<span class="t" style="top:377px;font-size:11.2px;line-height:12px;color:#000;left:273.04px;transform:scaleX(1.1000);">2</span>
<span class="t" style="top:377px;font-size:11.2px;line-height:12px;color:#000;left:337.04px;transform:scaleX(1.1000);">3</span>
<span class="t" style="top:457px;font-size:11.2px;line-height:12px;color:#000;left:42.75px;transform:scaleX(1.1000);">4:30 AM</span>
<span class="t" style="top:457px;font-size:11.2px;line-height:12px;color:#000;left:145.04px;transform:scaleX(1.1000);">1</span>
<span class="t" style="top:457px;font-size:11.2px;line-height:12px;color:#000;left:209.04px;transform:scaleX(1.1000);">1</span>
<span class="t" style="top:457px;font-size:11.2px;line-height:12px;color:#000;left:273.04px;transform:scaleX(1.1000);">1</span>
<span class="t" style="top:457px;font-size:11.2px;line-height:12px;color:#000;left:337.04px;transform:scaleX(1.1000);">1</span>
<span class="t" style="top:477px;font-size:11.2px;line-height:12px;color:#000;left:42.75px;transform:scaleX(1.1000);">5:30 AM</span>
<span class="t" style="top:477px;font-size:11.2px;line-height:12px;color:#000;left:145.04px;transform:scaleX(1.1000);">1</span>
<span class="t" style="top:477px;font-size:11.2px;line-height:12px;color:#000;left:209.04px;transform:scaleX(1.1000);">1</span>
<span class="t" style="top:477px;font-size:11.2px;line-height:12px;color:#000;left:273.04px;transform:scaleX(1.1000);">1</span>
<span class="t" style="top:477px;font-size:11.2px;line-height:12px;color:#000;left:337.04px;transform:scaleX(1.1000);">1</span>
<span class="t" style="top:497px;font-size:11.2px;line-height:12px;color:#000;left:42.75px;transform:scaleX(1.1000);">6:30 AM</span>
<span class="t" style="top:497px;font-size:11.2px;line-height:12px;color:#000;left:145.04px;transform:scaleX(1.1000);">1</span>
<span class="t" style="top:497px;font-size:11.2px;line-height:12px;color:#000;left:209.04px;transform:scaleX(1.1000);">1</span>
<span class="t" style="top:497px;font-size:11.2px;line-height:12px;color:#000;left:273.04px;transform:scaleX(1.1000);">1</span>
<span class="t" style="top:497px;font-size:11.2px;line-height:12px;color:#000;left:337.04px;transform:scaleX(1.1000);">1</span>
<span class="t" style="top:517px;font-size:11.2px;line-height:12px;color:#000;left:42.75px;transform:scaleX(1.1000);">7:30 AM</span>
<span class="t" style="top:517px;font-size:11.2px;line-height:12px;color:#000;left:145.04px;transform:scaleX(1.1000);">1</span>
<span class="t" style="top:517px;font-size:11.2px;line-height:12px;color:#000;left:209.04px;transform:scaleX(1.1000);">1</span>
<span class="t" style="top:517px;font-size:11.2px;line-height:12px;color:#000;left:273.04px;transform:scaleX(1.1000);">1</span>
<span class="t" style="top:517px;font-size:11.2px;line-height:12px;color:#000;left:337.04px;transform:scaleX(1.1000);">1</span>
<span class="t" style="top:537px;font-size:11.2px;line-height:12px;color:#000;left:42.75px;transform:scaleX(1.1000);">8:30 AM</span>
<span class="t" style="top:537px;font-size:11.2px;line-height:12px;color:#000;left:145.04px;transform:scaleX(1.1000);">1</span>
<span class="t" style="top:537px;font-size:11.2px;line-height:12px;color:#000;left:209.04px;transform:scaleX(1.1000);">1</span>
<span class="t" style="top:537px;font-size:11.2px;line-height:12px;color:#000;left:273.04px;transform:scaleX(1.1000);">1</span>
<span class="t" style="top:537px;font-size:11.2px;line-height:12px;color:#000;left:337.04px;transform:scaleX(1.1000);">1</span>
<span class="t" style="top:557px;font-size:11.2px;line-height:12px;color:#000;left:42.75px;transform:scaleX(1.1000);">9:30 AM</span>
<span class="t" style="top:557px;font-size:11.2px;line-height:12px;color:#000;left:145.04px;transform:scaleX(1.1000);">1</span>
<span class="t" style="top:557px;font-size:11.2px;line-height:12px;color:#000;left:209.04px;transform:scaleX(1.1000);">1</span>
<span class="t" style="top:557px;font-size:11.2px;line-height:12px;color:#000;left:273.04px;transform:scaleX(1.1000);">1</span>
<span class="t" style="top:557px;font-size:11.2px;line-height:12px;color:#000;left:337.04px;transform:scaleX(1.1000);">1</span>
<span class="t" style="top:577px;font-size:11.2px;line-height:12px;color:#000;left:35.89px;transform:scaleX(1.1000);">10:30 AM</span>
<span class="t" style="top:577px;font-size:11.2px;line-height:12px;color:#000;left:145.04px;transform:scaleX(1.1000);">1</span>
<span class="t" style="top:577px;font-size:11.2px;line-height:12px;color:#000;left:209.04px;transform:scaleX(1.1000);">1</span>
<span class="t" style="top:577px;font-size:11.2px;line-height:12px;color:#000;left:273.04px;transform:scaleX(1.1000);">1</span>
<span class="t" style="top:577px;font-size:11.2px;line-height:12px;color:#000;left:337.04px;transform:scaleX(1.1000);">1</span>
<span class="t" style="top:597px;font-size:11.2px;line-height:12px;color:#000;left:36.82px;transform:scaleX(1.1000);">11:30 AM</span>
<span class="t" style="top:597px;font-size:11.2px;line-height:12px;color:#000;left:145.04px;transform:scaleX(1.1000);">1</span>
<span class="t" style="top:597px;font-size:11.2px;line-height:12px;color:#000;left:209.04px;transform:scaleX(1.1000);">1</span>
<span class="t" style="top:597px;font-size:11.2px;line-height:12px;color:#000;left:273.04px;transform:scaleX(1.1000);">1</span>
<span class="t" style="top:597px;font-size:11.2px;line-height:12px;color:#000;left:337.04px;transform:scaleX(1.1000);">1</span>
<span class="t" style="top:617px;font-size:11.2px;line-height:12px;color:#000;left:36.80px;transform:scaleX(1.0670);">12:30 PM</span>
<span class="t" style="top:617px;font-size:11.2px;line-height:12px;color:#000;left:145.04px;transform:scaleX(1.1000);">1</span>
<span class="t" style="top:617px;font-size:11.2px;line-height:12px;color:#000;left:209.04px;transform:scaleX(1.1000);">1</span>
<span class="t" style="top:617px;font-size:11.2px;line-height:12px;color:#000;left:273.04px;transform:scaleX(1.1000);">1</span>
<span class="t" style="top:617px;font-size:11.2px;line-height:12px;color:#000;left:337.04px;transform:scaleX(1.1000);">1</span>
<span class="t" style="top:637px;font-size:11.2px;line-height:12px;color:#000;left:43.44px;transform:scaleX(1.0670);">1:30 PM</span>
<span class="t" style="top:637px;font-size:11.2px;line-height:12px;color:#000;left:145.04px;transform:scaleX(1.1000);">1</span>
<span class="t" style="top:637px;font-size:11.2px;line-height:12px;color:#000;left:209.04px;transform:scaleX(1.1000);">1</span>
<span class="t" style="top:637px;font-size:11.2px;line-height:12px;color:#000;left:273.04px;transform:scaleX(1.1000);">1</span>
<span class="t" style="top:637px;font-size:11.2px;line-height:12px;color:#000;left:337.04px;transform:scaleX(1.1000);">1</span>
<span class="t" style="top:657px;font-size:11.2px;line-height:12px;color:#000;left:43.44px;transform:scaleX(1.0670);">2:30 PM</span>
<span class="t" style="top:657px;font-size:11.2px;line-height:12px;color:#000;left:145.04px;transform:scaleX(1.1000);">1</span>
<span class="t" style="top:657px;font-size:11.2px;line-height:12px;color:#000;left:209.04px;transform:scaleX(1.1000);">1</span>
<span class="t" style="top:657px;font-size:11.2px;line-height:12px;color:#000;left:273.04px;transform:scaleX(1.1000);">1</span>
<span class="t" style="top:657px;font-size:11.2px;line-height:12px;color:#000;left:337.04px;transform:scaleX(1.1000);">1</span>
<span class="t" style="top:677px;font-size:11.2px;line-height:12px;color:#000;left:43.44px;transform:scaleX(1.0670);">3:30 PM</span>
<span class="t" style="top:677px;font-size:11.2px;line-height:12px;color:#000;left:145.04px;transform:scaleX(1.1000);">1</span>
<span class="t" style="top:677px;font-size:11.2px;line-height:12px;color:#000;left:209.04px;transform:scaleX(1.1000);">1</span>
<span class="t" style="top:677px;font-size:11.2px;line-height:12px;color:#000;left:273.04px;transform:scaleX(1.1000);">1</span>
<span class="t" style="top:677px;font-size:11.2px;line-height:12px;color:#000;left:337.04px;transform:scaleX(1.1000);">1</span>
<span class="t" style="top:437px;font-size:11.2px;line-height:12px;color:#000;font-weight:bold;left:45.28px;transform:scaleX(1.0200);">Time</span>
<span class="t" style="top:437px;font-size:11.2px;line-height:12px;color:#000;font-weight:bold;left:105.37px;transform:scaleX(1.0200);">Safety</span>
<span class="t" style="top:437px;font-size:11.2px;line-height:12px;color:#000;font-weight:bold;left:167.16px;transform:scaleX(1.0200);">Quality</span>
<span class="t" style="top:437px;font-size:11.2px;line-height:12px;color:#000;font-weight:bold;left:228.29px;transform:scaleX(1.0200);">Delivery</span>
<span class="t" style="top:437px;font-size:11.2px;line-height:12px;color:#000;font-weight:bold;left:301.81px;transform:scaleX(1.0200);">Cost</span>
<span class="t" style="top:196px;font-size:12.4px;line-height:14px;color:#000;left:518.50px;transform:scaleX(1.0616);">Warning</span>
<span class="t" style="top:216px;font-size:12.4px;line-height:14px;color:#000;left:518.90px;transform:scaleX(1.0466);">Fail</span>
<div class="a" style="left:559px;top:106px;width:170px;height:261px;background:#fff;border:1px solid #c2c2c2;box-shadow:1px 1px 3px rgba(0,0,0,.16)"></div>
<div class="a" style="left:562px;top:108px;width:167px;height:21px;background:#e9e9e9"></div>
<div class="a" style="left:562px;top:186px;width:167px;height:21px;background:#e9e9e9"></div>
<div class="a" style="left:562px;top:263px;width:167px;height:22px;background:#e9e9e9"></div>
<div class="a" style="left:561px;top:285px;width:56px;height:56px;background:#c6c6c6"></div>
<div class="a" style="left:562px;top:341px;width:166px;height:1px;background:#dcdcdc"></div>
<div class="a" style="left:592px;top:360px;width:10px;height:1px;background:#444"></div>
<div class="a" style="left:457px;top:376px;width:480px;height:288px;background:#fff"></div>
<svg width="950" height="705" viewBox="0 0 950 705">
<rect x="457.5" y="376.4" width="478.9" height="287" fill="none" stroke="#9a9a9a" stroke-width="1.25"/>
<path d="M696.50,425.10 A85.4,85.4 0 0 1 739.20,436.54 L728.90,454.38 A64.8,64.8 0 0 0 696.50,445.70z" fill="#5b9bd5"/>
<path d="M739.20,436.54 A85.4,85.4 0 0 1 770.46,467.80 L752.62,478.10 A64.8,64.8 0 0 0 728.90,454.38z" fill="#ed7d31"/>
<path d="M770.46,467.80 A85.4,85.4 0 0 1 781.90,510.50 L761.30,510.50 A64.8,64.8 0 0 0 752.62,478.10z" fill="#a5a5a5"/>
<path d="M781.90,510.50 A85.4,85.4 0 0 1 770.46,553.20 L752.62,542.90 A64.8,64.8 0 0 0 761.30,510.50z" fill="#ffc000"/>
<path d="M770.46,553.20 A85.4,85.4 0 0 1 739.20,584.46 L728.90,566.62 A64.8,64.8 0 0 0 752.62,542.90z" fill="#4472c4"/>
<path d="M739.20,584.46 A85.4,85.4 0 0 1 696.50,595.90 L696.50,575.30 A64.8,64.8 0 0 0 728.90,566.62z" fill="#70ad47"/>
<path d="M696.50,595.90 A85.4,85.4 0 0 1 653.80,584.46 L664.10,566.62 A64.8,64.8 0 0 0 696.50,575.30z" fill="#255e91"/>
<path d="M653.80,584.46 A85.4,85.4 0 0 1 622.54,553.20 L640.38,542.90 A64.8,64.8 0 0 0 664.10,566.62z" fill="#9e480e"/>
<path d="M622.54,553.20 A85.4,85.4 0 0 1 611.10,510.50 L631.70,510.50 A64.8,64.8 0 0 0 640.38,542.90z" fill="#636363"/>
<path d="M611.10,510.50 A85.4,85.4 0 0 1 622.54,467.80 L640.38,478.10 A64.8,64.8 0 0 0 631.70,510.50z" fill="#997300"/>
<path d="M622.54,467.80 A85.4,85.4 0 0 1 653.80,436.54 L664.10,454.38 A64.8,64.8 0 0 0 640.38,478.10z" fill="#264478"/>
<path d="M653.80,436.54 A85.4,85.4 0 0 1 696.50,425.10 L696.50,445.70 A64.8,64.8 0 0 0 664.10,454.38z" fill="#43682b"/>
<circle cx="696.5" cy="510.5" r="80.75" fill="none" stroke="#fff" stroke-width="2.0"/>
<circle cx="696.5" cy="510.5" r="75.10" fill="none" stroke="#fff" stroke-width="2.0"/>
<circle cx="696.5" cy="510.5" r="69.45" fill="none" stroke="#fff" stroke-width="2.0"/>
<path d="M696.50,446.70 L696.50,424.10" stroke="#fff" stroke-width="2.2"/>
<path d="M728.40,455.25 L739.70,435.68" stroke="#fff" stroke-width="2.2"/>
<path d="M751.75,478.60 L771.32,467.30" stroke="#fff" stroke-width="2.2"/>
<path d="M760.30,510.50 L782.90,510.50" stroke="#fff" stroke-width="2.2"/>
<path d="M751.75,542.40 L771.32,553.70" stroke="#fff" stroke-width="2.2"/>
<path d="M728.40,565.75 L739.70,585.32" stroke="#fff" stroke-width="2.2"/>
<path d="M696.50,574.30 L696.50,596.90" stroke="#fff" stroke-width="2.2"/>
<path d="M664.60,565.75 L653.30,585.32" stroke="#fff" stroke-width="2.2"/>
<path d="M641.25,542.40 L621.68,553.70" stroke="#fff" stroke-width="2.2"/>
<path d="M632.70,510.50 L610.10,510.50" stroke="#fff" stroke-width="2.2"/>
<path d="M641.25,478.60 L621.68,467.30" stroke="#fff" stroke-width="2.2"/>
<path d="M664.60,455.25 L653.30,435.68" stroke="#fff" stroke-width="2.2"/>
<rect x="520" y="620.8" width="4.4" height="5" fill="#5b9bd5"/>
<rect x="580.8" y="620.8" width="4.4" height="5" fill="#ed7d31"/>
<rect x="641.6" y="620.8" width="4.4" height="5" fill="#a5a5a5"/>
<rect x="702.3" y="620.8" width="4.4" height="5" fill="#ffc000"/>
<rect x="762.6" y="620.8" width="4.4" height="5" fill="#4472c4"/>
<rect x="823.6" y="620.8" width="4.4" height="5" fill="#70ad47"/>
<rect x="520" y="642.6" width="4.4" height="5" fill="#255e91"/>
<rect x="580.8" y="642.6" width="4.4" height="5" fill="#9e480e"/>
<rect x="641.6" y="642.6" width="4.4" height="5" fill="#636363"/>
<rect x="702.3" y="642.6" width="4.4" height="5" fill="#997300"/>
<rect x="762.6" y="642.6" width="4.4" height="5" fill="#264478"/>
<rect x="823.6" y="642.6" width="4.4" height="5" fill="#43682b"/>
<circle cx="457.5" cy="376.4" r="4.7" fill="#fff" stroke="#8a8a8a" stroke-width="1.6"/>
<circle cx="696.8" cy="376.4" r="4.7" fill="#fff" stroke="#8a8a8a" stroke-width="1.6"/>
<circle cx="936.4" cy="376.4" r="4.7" fill="#fff" stroke="#8a8a8a" stroke-width="1.6"/>
<circle cx="457.5" cy="519.8" r="4.7" fill="#fff" stroke="#8a8a8a" stroke-width="1.6"/>
<circle cx="936.4" cy="519.8" r="4.7" fill="#fff" stroke="#8a8a8a" stroke-width="1.6"/>
<circle cx="457.5" cy="663.4" r="4.7" fill="#fff" stroke="#8a8a8a" stroke-width="1.6"/>
<circle cx="696.8" cy="663.4" r="4.7" fill="#fff" stroke="#8a8a8a" stroke-width="1.6"/>
<circle cx="936.4" cy="663.4" r="4.7" fill="#fff" stroke="#8a8a8a" stroke-width="1.6"/>
<circle cx="588.6" cy="156.4" r="17.3" fill="#fff" stroke="#808080" stroke-width="1"/>
<path d="M588.6,156.4 v-17.3 a17.3,17.3 0 0 1 12.23,29.53z" fill="#d2d2d2" stroke="#808080" stroke-width="1"/>
<path d="M644,147.6 L660,150.5 M644,165.2 L660,163.5" stroke="#808080" stroke-width="0.9" fill="none"/>
<circle cx="635.4" cy="156.4" r="12.3" fill="#d2d2d2" stroke="#808080" stroke-width="1"/>
<path d="M635.4,156.4 l8.7,-8.7 a12.3,12.3 0 0 1 0,17.4z" fill="#fff" stroke="#808080" stroke-width="1"/>
<circle cx="660" cy="157" r="6.5" fill="#d2d2d2" stroke="#808080" stroke-width="1"/>
<path d="M660,157 v-6.5 a6.5,6.5 0 0 1 4.6,11.1z" fill="#fff" stroke="#808080" stroke-width="0.9"/>
<path d="M697,147.4 h14 M697,165.6 h14" stroke="#808080" stroke-width="0.9" fill="none"/>
<circle cx="692.4" cy="156.4" r="12.3" fill="#d2d2d2" stroke="#808080" stroke-width="1"/>
<path d="M692.4,156.4 l8.7,-8.7 a12.3,12.3 0 0 1 0,17.4z" fill="#fff" stroke="#808080" stroke-width="1"/>
<rect x="711.5" y="147.5" width="10" height="18" fill="#fff" stroke="#808080" stroke-width="1"/>
<rect x="711.5" y="153.5" width="10" height="6" fill="#d2d2d2" stroke="#808080" stroke-width="1"/>
<path d="M568.6,231.4 v6 a19.8,10.2 0 0 0 39.6,0 v-6" fill="#d2d2d2" stroke="#808080" stroke-width="1"/>
<path d="M598,240.2 v6.2 a19.8,10.2 0 0 0 10.2,-9 v-6z" fill="#fff" stroke="#808080" stroke-width="1"/>
<ellipse cx="588.4" cy="231.4" rx="19.8" ry="10.2" fill="#d2d2d2" stroke="#808080" stroke-width="1"/>
<path d="M588.4,231.4 v-10.2 a19.8,10.2 0 0 1 9.6,19.1z" fill="#fff" stroke="#808080" stroke-width="1"/>
<circle cx="588.3" cy="311.6" r="17.2" fill="#fff" stroke="#808080" stroke-width="1"/>
<path d="M588.3,294.4 a17.2,17.2 0 0 1 12.16,29.36 l-5.4,-5.4 a9.6,9.6 0 0 0 -6.76,-16.36z" fill="#dcdcdc" stroke="#808080" stroke-width="1"/>
<circle cx="588.3" cy="311.6" r="9.6" fill="#c6c6c6" stroke="#808080" stroke-width="1"/>
<circle cx="573" cy="355.2" r="5.4" fill="#fff" stroke="#666" stroke-width="1.1"/>
<path d="M573,355.2 v-5.4 a5.4,5.4 0 0 1 3.8,9.2z" fill="#cfcfcf" stroke="#666" stroke-width="1"/>
</svg>
<span class="t" style="top:111px;font-size:12px;line-height:14px;color:#666;font-weight:bold;left:569.50px;transform:scaleX(1.0224);">2-D Pie</span>
<span class="t" style="top:189px;font-size:12px;line-height:14px;color:#666;font-weight:bold;left:569.50px;transform:scaleX(1.0224);">3-D Pie</span>
<span class="t" style="top:267px;font-size:12px;line-height:14px;color:#666;font-weight:bold;left:570.50px;transform:scaleX(0.9761);">Doughnut</span>
<span class="t" style="top:347px;font-size:12px;line-height:14px;color:#444;left:591.50px;transform:scaleX(0.9679);">More Pie Charts...</span>
<span class="t" style="top:388px;font-size:16.75px;line-height:19px;color:#595959;left:656.80px;transform:scaleX(1.0361);">Chart Title</span>
<span class="t" style="top:616px;font-size:10.8px;line-height:12px;color:#595959;left:527.90px;transform:scaleX(1.0500);">4:30 AM</span>
<span class="t" style="top:616px;font-size:10.8px;line-height:12px;color:#595959;left:588.70px;transform:scaleX(1.0500);">5:30 AM</span>
<span class="t" style="top:616px;font-size:10.8px;line-height:12px;color:#595959;left:649.50px;transform:scaleX(1.0500);">6:30 AM</span>
<span class="t" style="top:616px;font-size:10.8px;line-height:12px;color:#595959;left:710.20px;transform:scaleX(1.0500);">7:30 AM</span>
<span class="t" style="top:616px;font-size:10.8px;line-height:12px;color:#595959;left:770.50px;transform:scaleX(1.0500);">8:30 AM</span>
<span class="t" style="top:616px;font-size:10.8px;line-height:12px;color:#595959;left:831.50px;transform:scaleX(1.0500);">9:30 AM</span>
<span class="t" style="top:638px;font-size:10.8px;line-height:12px;color:#595959;left:527.90px;transform:scaleX(1.0500);">10:30 AM</span>
<span class="t" style="top:638px;font-size:10.8px;line-height:12px;color:#595959;left:588.70px;transform:scaleX(1.0500);">11:30 AM</span>
<span class="t" style="top:638px;font-size:10.8px;line-height:12px;color:#595959;left:649.50px;transform:scaleX(1.0028);">12:30 PM</span>
<span class="t" style="top:638px;font-size:10.8px;line-height:12px;color:#595959;left:710.20px;transform:scaleX(1.0028);">1:30 PM</span>
<span class="t" style="top:638px;font-size:10.8px;line-height:12px;color:#595959;left:770.50px;transform:scaleX(1.0028);">2:30 PM</span>
<span class="t" style="top:638px;font-size:10.8px;line-height:12px;color:#595959;left:831.50px;transform:scaleX(1.0028);">3:30 PM</span>
<svg width="950" height="705" viewBox="0 0 950 705"><g fill="none" stroke="#e2001a"><ellipse cx="153" cy="19.45" rx="27.7" ry="14.05" stroke-width="2.4"/><ellipse cx="575.95" cy="93.1" rx="20.25" ry="16.3" stroke-width="2.8"/><ellipse cx="594.7" cy="304.7" rx="41.9" ry="44.4" stroke-width="2.3"/></g></svg>
</body></html>
